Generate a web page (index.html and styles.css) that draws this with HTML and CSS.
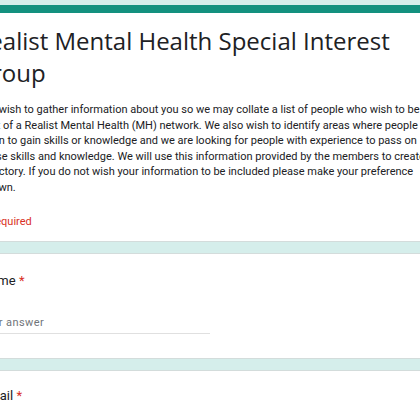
FILE: index.html
```html
<!DOCTYPE html>
<html lang="en">
<head>
    <meta charset="UTF-8">
    <title>Realist Mental Health Special Interest Group</title>
    <link rel="stylesheet" href="styles.css">
</head>
<body>
    <div class="form">
        <div class="card card-head">
            <h1 class="form-title">Realist Mental Health Special Interest<br>Group</h1>
            <p class="form-desc">
                We wish to gather information about you so we may collate a list of people who wish to be<br>
                part of a Realist Mental Health (MH) network. We also wish to identify areas where people<br>
                learn to gain skills or knowledge and we are looking for people with experience to pass on<br>
                these skills and knowledge. We will use this information provided by the members to create a<br>
                directory. If you do not wish your information to be included please make your preference<br>
                known.
            </p>
            <p class="required-note">* Required</p>
        </div>

        <div class="card question">
            <div class="q-label">Name <span class="star">*</span></div>
            <div class="q-input">Your answer</div>
        </div>

        <div class="card question question-last">
            <div class="q-label">Email <span class="star">*</span></div>
        </div>
    </div>
</body>
</html>
```

FILE: styles.css
```css
:root{
    --teal: #13917f;
    --bg: #d5eeeb;
    --text: #202124;
}
html, body{
    margin: 0;
    padding: 0;
    height: 100%;
    overflow: hidden;
    background: var(--bg);
    font-family: Roboto, "Liberation Sans", sans-serif;
    color: var(--text);
}

.form{
    width: 640px;
    margin-left: -44px;
    padding-top: 5px;
    display: flex;
    flex-direction: column;
    gap: 11px;
}

.card{
    background: #fff;
    border: 1px solid #d3dcdb;
    border-radius: 8px;
    padding: 0 24px;
}

.card-head{
    border-top: 8px solid var(--teal);
    padding-top: 12px;
    padding-bottom: 11px;
}

.form-title{
    margin: 0 0 0 -6.5px;
    font-family: "Open Sans", Roboto, sans-serif;
    font-size: 24px;
    line-height: 32px;
    font-weight: 400;
    letter-spacing: 0;
}

.form-desc{
    margin: 13px 0 0 -0.5px;
    font-size: 11px;
    line-height: 15.6px;
    white-space: nowrap;
}

.required-note{
    margin: 18px 0 0;
    font-size: 11px;
    line-height: 16px;
    color: #d93025;
}

.question{
    padding-top: 18px;
    padding-bottom: 24px;
}
.question-last{
    padding-top: 16px;
}

.q-label{
    font-size: 13px;
    line-height: 18px;
}
.star{
    color: #d93025;
}

.q-input{
    margin: 25px 0 0 -2px;
    width: 231px;
    font-size: 11px;
    line-height: 16px;
    letter-spacing: 0.4px;
    color: #70757a;
    padding-bottom: 2px;
    border-bottom: 1px solid #e0e0e0;
}
```
